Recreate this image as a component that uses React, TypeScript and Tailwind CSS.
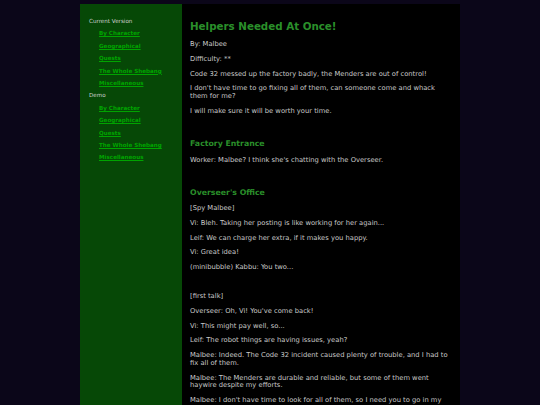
import React from "react";

const links = ["By Character", "Geographical", "Quests", "The Whole Shebang", "Miscellaneous"];

function Group({ title }: { title: string }) {
  return (
    <li>
      <div className="leading-[12.4px] text-[#cfcfcf]">{title}</div>
      <ul className="pl-[10px]">
        {links.map((l) => (
          <li key={l} className="leading-[12.4px]">
            <a href="#" className="font-bold text-[#00a300] underline">{l}</a>
          </li>
        ))}
      </ul>
    </li>
  );
}

const P = ({ children }: { children?: React.ReactNode }) => (
  <p className="my-[6.75px] leading-[7.9px]">{children}</p>
);
const H3 = ({ children }: { children: React.ReactNode }) => (
  <h3 className="my-[8.5px] text-[7.8px] leading-[9.2px] font-bold text-[#2a8f2a]">{children}</h3>
);

export default function App() {
  return (
    <div className="min-h-[405px] bg-[#0b0619] pt-[4px]" style={{ fontFamily: '"DejaVu Sans", Verdana, sans-serif' }}>
      <div className="mx-auto flex w-[380px] min-h-[401px]">
        <nav className="w-[102px] shrink-0 bg-[#064806] pl-[9px] pt-[11px] text-[5.6px]">
          <ul>
            <Group title="Current Version" />
            <Group title="Demo" />
          </ul>
        </nav>
        <main className="flex-1 bg-black px-[8px] pt-[9px] text-[6.75px] text-[#c9c9c9] overflow-hidden">
          <h1 className="mt-[7px] mb-[9.4px] text-[10.3px] leading-[12px] font-bold text-[#2a8f2a]">Helpers Needed At Once!</h1>
          <P>By: Malbee</P>
          <P>Difficulty: **</P>
          <P>Code 32 messed up the factory badly, the Menders are out of control!</P>
          <P>I don't have time to go fixing all of them, can someone come and whack them for me?</P>
          <P>I will make sure it will be worth your time.</P>
          <P>&nbsp;</P>
          <H3>Factory Entrance</H3>
          <P>Worker: Malbee? I think she's chatting with the Overseer.</P>
          <P>&nbsp;</P>
          <H3>Overseer's Office</H3>
          <P>[Spy Malbee]</P>
          <P>Vi: Bleh. Taking her posting is like working for her again...</P>
          <P>Leif: We can charge her extra, if it makes you happy.</P>
          <P>Vi: Great idea!</P>
          <P>(minibubble) Kabbu: You two...</P>
          <P>&nbsp;</P>
          <P>[first talk]</P>
          <P>Overseer: Oh, Vi! You've come back!</P>
          <P>Vi: This might pay well, so...</P>
          <P>Leif: The robot things are having issues, yeah?</P>
          <P>Malbee: Indeed. The Code 32 incident caused plenty of trouble, and I had to fix all of them.</P>
          <P>Malbee: The Menders are durable and reliable, but some of them went haywire despite my efforts.</P>
          <P>Malbee: I don't have time to look for all of them, so I need you to go in my stead.</P>
        </main>
      </div>
    </div>
  );
}
